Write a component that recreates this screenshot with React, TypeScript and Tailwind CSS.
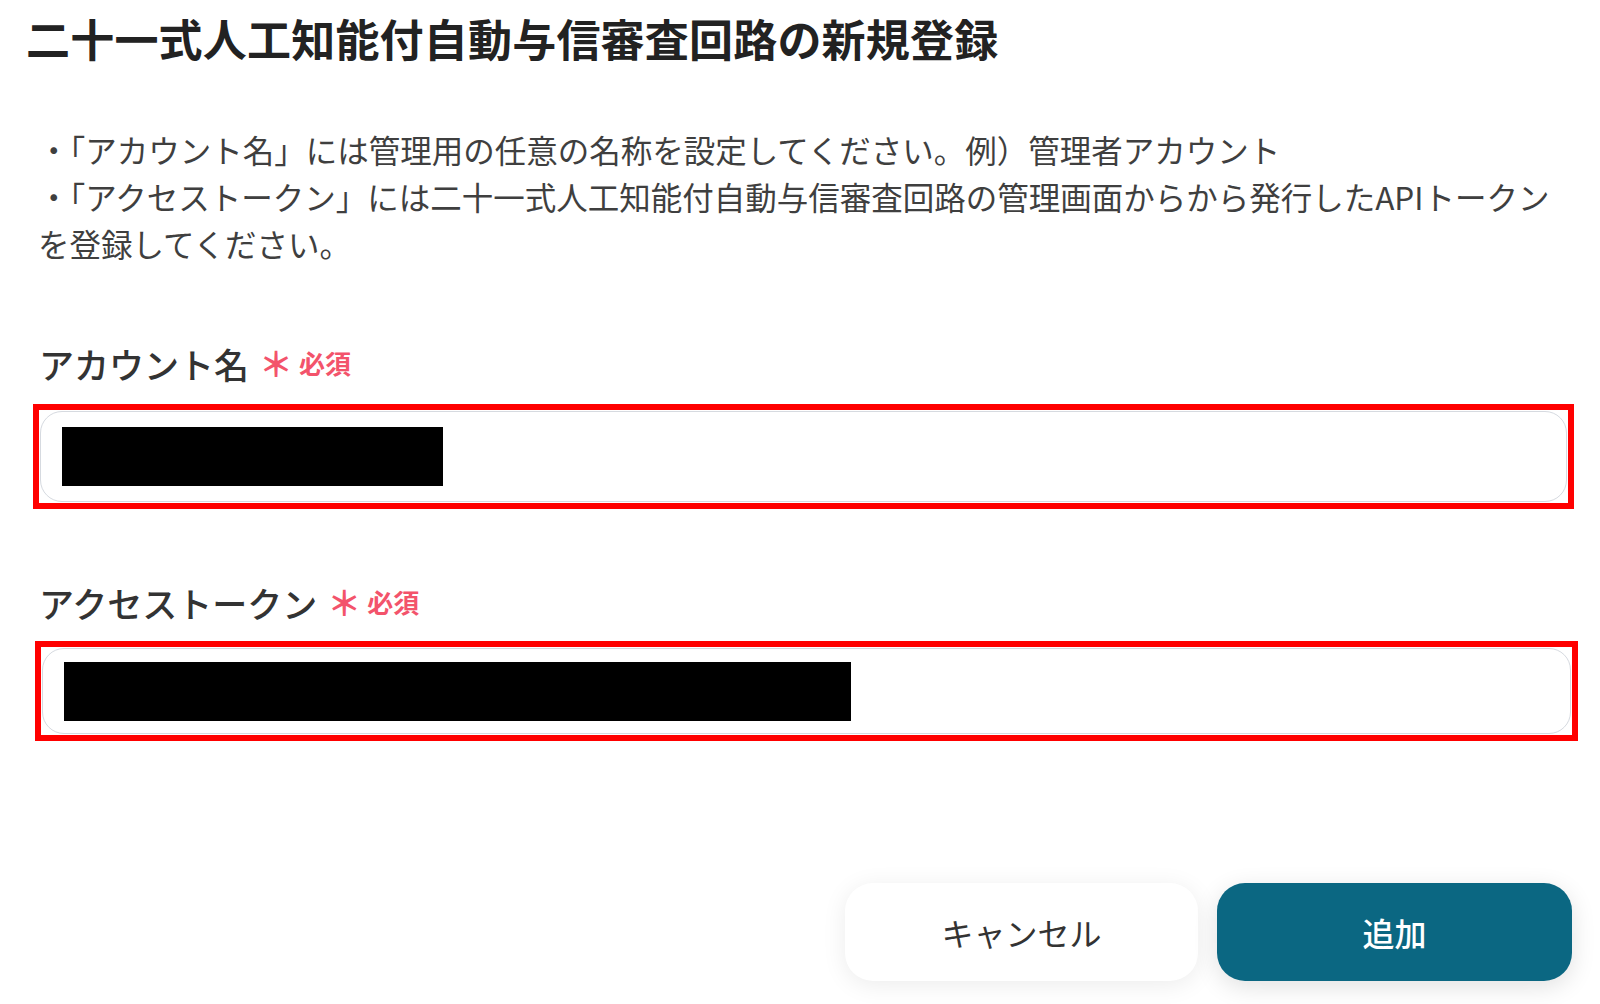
const jp = { fontFamily: '"Noto Sans CJK JP", "Noto Sans", sans-serif' };

const Required = () => (
  <span className="ml-[10px] inline-flex items-center gap-[6px] text-[#f3536b] font-bold">
    <span className="text-[34px] leading-none">＊</span>
    <span className="text-[26px] leading-none">必須</span>
  </span>
);

const MaskedField: React.FC<{ maskWidth: string; className: string; height: string }> = ({
  maskWidth,
  className,
  height,
}) => (
  <div className={`border-[6px] border-[#ff0000] p-[1px] ${className}`}>
    <div className={`rounded-[22px] border-[1.5px] border-[#d6dae0] bg-white flex items-center pl-[21px] ${height}`}>
      <div className={`h-[59px] bg-black ${maskWidth}`} />
    </div>
  </div>
);

export default function App() {
  return (
    <div className="w-[1600px] h-[1004px] bg-white overflow-hidden text-[#333]" style={jp}>
      <h1 className="ml-[26px] pt-[16px] text-[44px] leading-[44px] tracking-[0.2px] font-bold text-[#222] whitespace-nowrap">
        二十一式人工知能付自動与信審査回路の新規登録
      </h1>

      <div className="ml-[38px] mt-[66px] text-[31.5px] leading-[47px] text-[#3f3f3f] whitespace-nowrap">
        <p>・「アカウント名」には管理用の任意の名称を設定してください。例）管理者アカウント</p>
        <p>
          ・「アクセストークン」には二十一式人工知能付自動与信審査回路の管理画面からから発行したAPIトークン
          <br />
          を登録してください。
        </p>
      </div>

      <div className="ml-[39px] mt-[76px] flex items-center h-[40px]">
        <span className="text-[35px] leading-none font-medium text-[#333]">アカウント名</span>
        <Required />
      </div>
      <MaskedField className="ml-[33px] mt-[21px] w-[1541px]" height="h-[91px]" maskWidth="w-[381px]" />

      <div className="ml-[39px] mt-[73px] flex items-center h-[40px]">
        <span className="text-[35px] leading-none font-medium text-[#333]">アクセストークン</span>
        <Required />
      </div>
      <MaskedField className="ml-[35px] mt-[19px] w-[1543px]" height="h-[86px]" maskWidth="w-[787px]" />

      <div className="mt-[142px] flex justify-end gap-[19px] pr-[28px]">
        <button className="w-[353px] h-[98px] rounded-[28px] bg-white shadow-[0_4px_24px_rgba(0,0,0,0.08)] text-[32px] text-[#333]">
          キャンセル
        </button>
        <button className="w-[355px] h-[98px] rounded-[28px] bg-[#0b6782] shadow-[0_6px_24px_rgba(0,0,0,0.12)] text-[32px] font-medium text-white">
          追加
        </button>
      </div>
    </div>
  );
}
